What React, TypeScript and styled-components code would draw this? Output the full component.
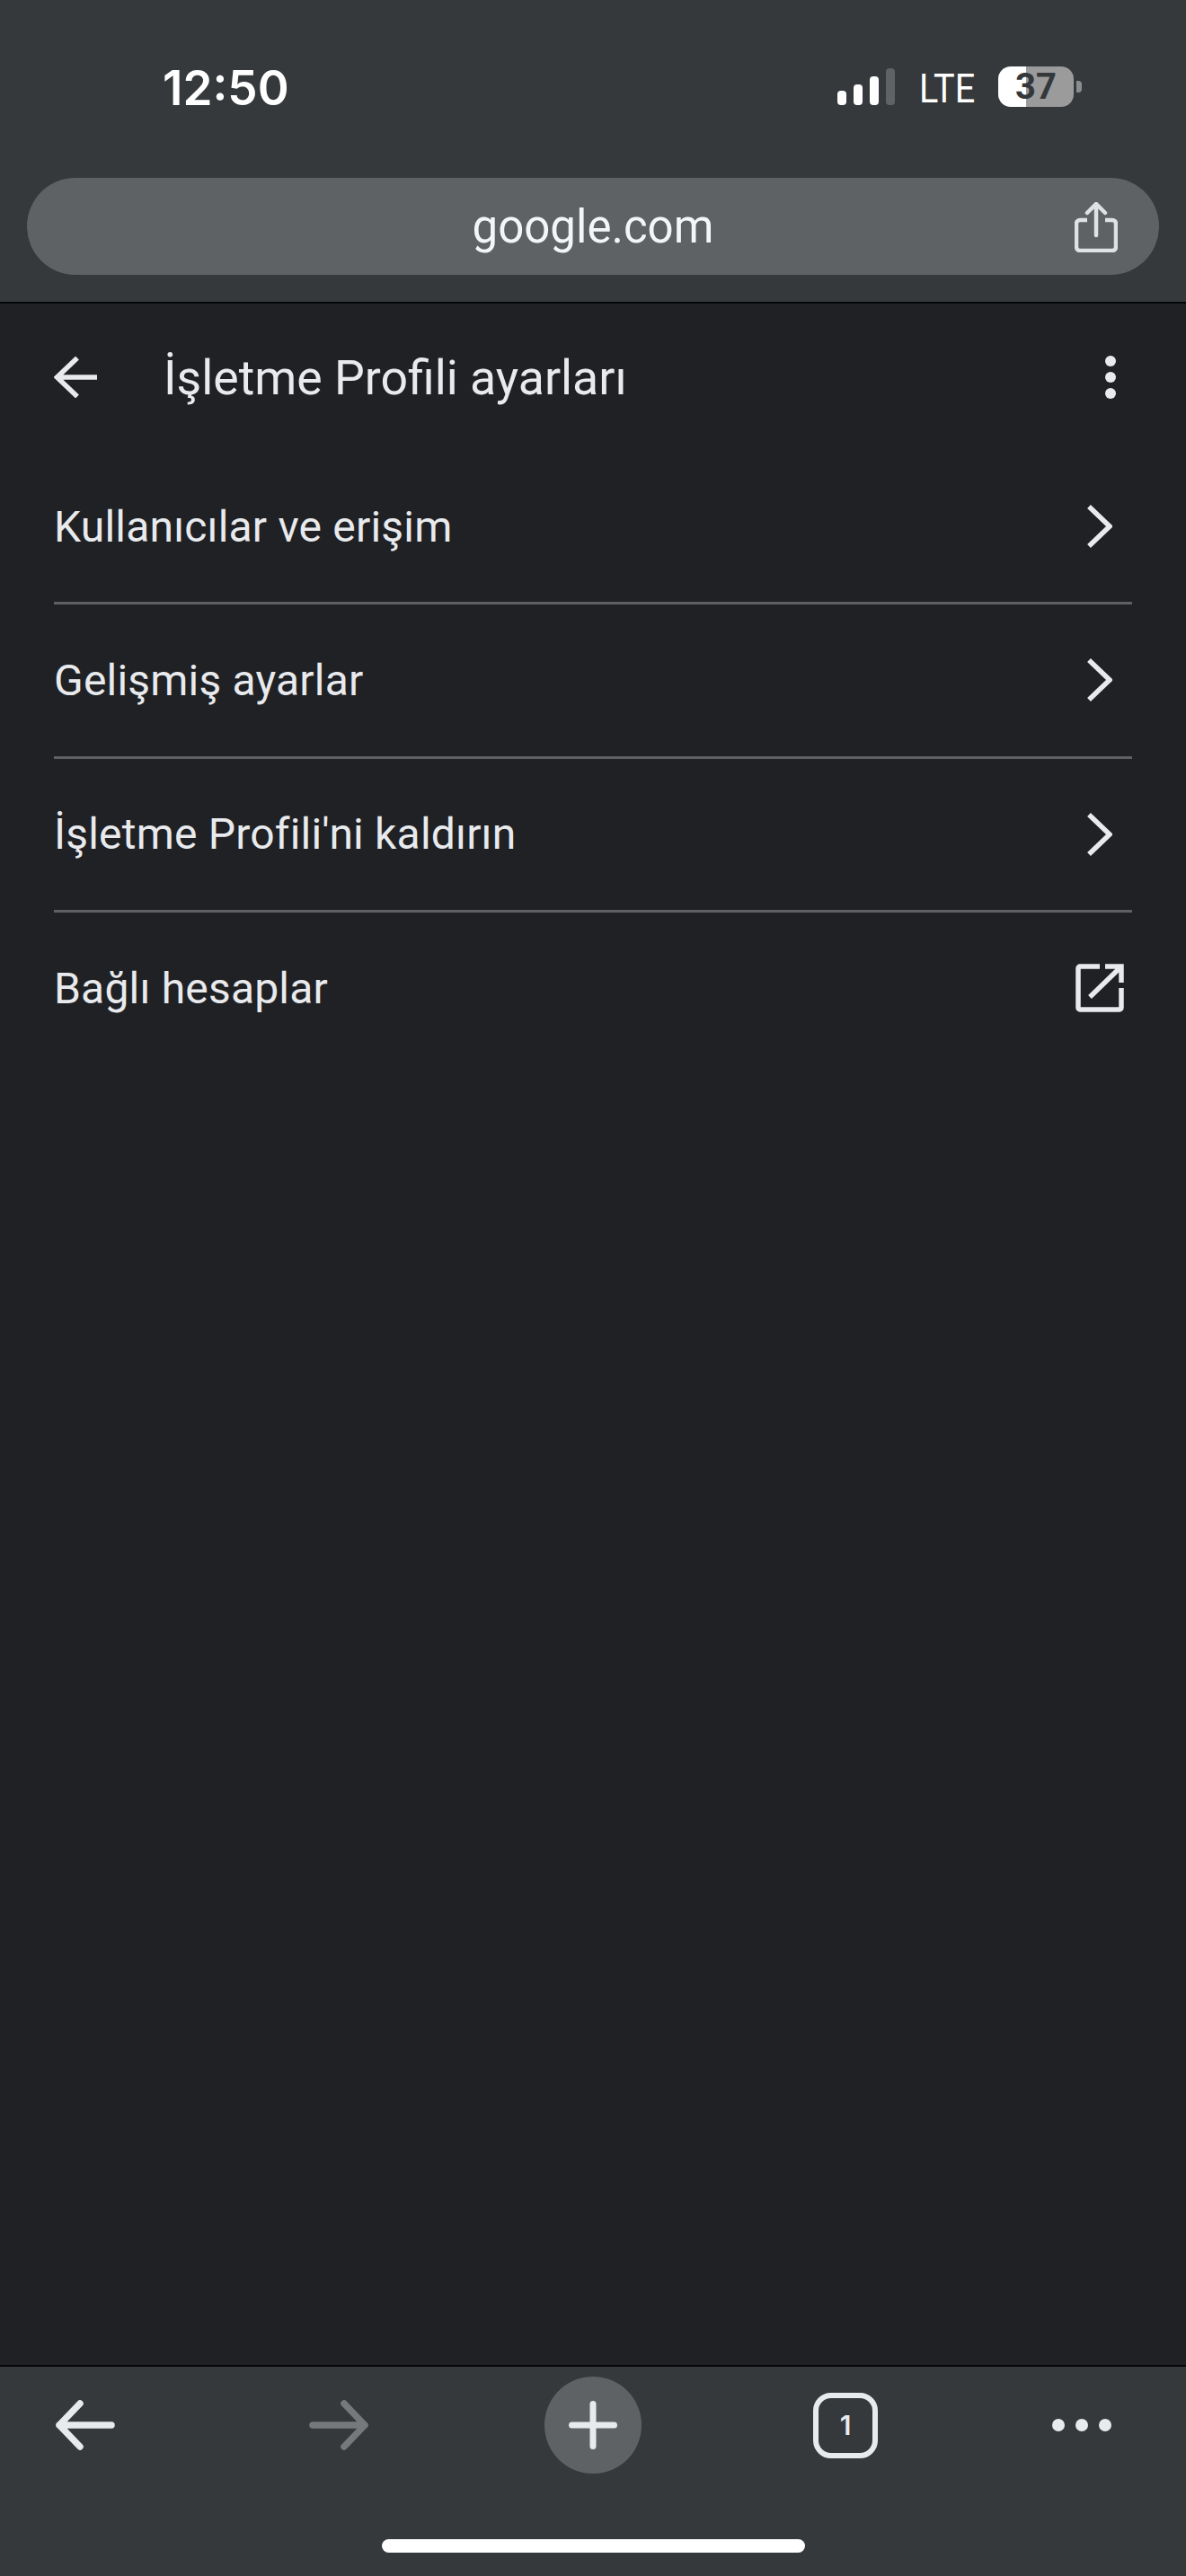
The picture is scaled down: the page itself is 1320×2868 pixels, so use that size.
// App.tsx
import React from 'react';
import styled, { createGlobalStyle } from 'styled-components';

const GlobalStyle = createGlobalStyle`
  html, body {
    margin: 0;
    padding: 0;
    background: #202125;
  }
  * {
    box-sizing: border-box;
  }
`;

const Page = styled.div`
  width: 1320px;
  height: 2868px;
  display: flex;
  flex-direction: column;
  background: #202125;
  font-family: Roboto, "Noto Sans", sans-serif;
  color: #e8eaed;
  overflow: hidden;
`;

const TopBar = styled.header`
  height: 338px;
  flex-shrink: 0;
  background: #35393b;
  border-bottom: 2px solid #050607;
  padding: 0 30px;
`;

const StatusBar = styled.div`
  height: 198px;
  display: flex;
  justify-content: space-between;
  padding: 68px 86px 0 151px;
`;

const Time = styled.div`
  font-family: Inter, sans-serif;
  font-size: 53px;
  font-weight: 600;
  line-height: 60px;
  color: #fff;
`;

const StatusRight = styled.div`
  display: flex;
  align-items: flex-start;
  padding-top: 6px;
`;

const Signal = styled.div`
  display: flex;
  align-items: flex-end;
  gap: 7.4px;
  height: 41px;
  margin-top: 2px;
`;

const SignalBar = styled.span<{ $h: number; $off?: boolean }>`
  width: 10.5px;
  height: ${(p) => p.$h}px;
  border-radius: 4px;
  background: ${(p) => (p.$off ? '#5f6365' : '#fff')};
`;

const Lte = styled.span`
  width: 60px;
  margin: 3px 0 0 27px;
  font-size: 45px;
  line-height: 44px;
  color: #fff;
  white-space: nowrap;
  transform: scaleX(0.88);
  transform-origin: left center;
`;

const Battery = styled.div`
  width: 84px;
  height: 45px;
  margin-left: 28px;
  border-radius: 14px;
  background: linear-gradient(90deg, #fff 0 37%, #9b9b9c 37% 100%);
  text-align: center;
  font-size: 40px;
  font-weight: 700;
  line-height: 45px;
  color: #35383a;
`;

const BatteryNub = styled.span`
  width: 6px;
  height: 13px;
  margin: 16px 0 0 3px;
  border-radius: 0 4px 4px 0;
  background: #8b8d8e;
`;

const UrlPill = styled.div`
  position: relative;
  height: 108px;
  border-radius: 54px;
  background: #5e6265;
  display: flex;
  align-items: center;
  justify-content: center;
  font-size: 51px;
  color: #f4f5f6;
`;

const ShareButton = styled.span`
  position: absolute;
  right: 46px;
  top: 27px;
  display: flex;
`;

const TitleRow = styled.div`
  height: 164px;
  flex-shrink: 0;
  display: flex;
  align-items: center;
  padding: 0 60px;
`;

const Title = styled.h1`
  flex: 1;
  margin: 0 0 0 74px;
  font-size: 53.6px;
  font-weight: 400;
  color: #e8eaed;
`;

const Dots = styled.span`
  display: flex;
  flex-direction: column;
  gap: 6px;
  margin-right: 18px;
`;

const Dot = styled.span`
  width: 12px;
  height: 12px;
  border-radius: 50%;
  background: #e8eaed;
`;

const List = styled.div`
  flex: 1;
  padding: 0 60px;
`;

const Row = styled.div`
  height: 171.3px;
  display: flex;
  align-items: center;
  justify-content: space-between;
  font-size: 48px;
  letter-spacing: 0.2px;
  border-bottom: 3px solid #5f6064;
  &:last-child {
    border-bottom-color: transparent;
  }
`;

const RowIcon = styled.span<{ $right: number }>`
  display: flex;
  margin-right: ${(p) => p.$right}px;
`;

const BottomBar = styled.footer`
  height: 235px;
  flex-shrink: 0;
  background: #35393b;
  border-top: 2px solid #050607;
`;

const BottomNav = styled.nav`
  height: 130px;
  display: grid;
  grid-template-columns: 282px 262px 299px 266px auto;
  align-items: center;
  justify-items: start;
  padding: 0 0 0 62px;
`;

const PlusCircle = styled.span`
  width: 108px;
  height: 108px;
  border-radius: 50%;
  background: #5e6265;
  display: flex;
  align-items: center;
  justify-content: center;
`;

const TabCount = styled.span`
  width: 72px;
  height: 73px;
  border: 6px solid #e8eaed;
  border-radius: 20px;
  display: flex;
  align-items: center;
  justify-content: center;
  font-family: Inter, sans-serif;
  font-size: 30px;
  font-weight: 600;
  color: #e8eaed;
`;

const MoreDots = styled.span`
  display: flex;
  gap: 12px;
`;

const MoreDot = styled.span`
  width: 14px;
  height: 14px;
  border-radius: 50%;
  background: #e8eaed;
`;

const HomeIndicator = styled.div`
  width: 471px;
  height: 15px;
  margin: 62px auto 0;
  border-radius: 8px;
  background: #fff;
`;

const ShareIcon = () => (
  <svg width="48" height="56" viewBox="0 0 48 56" fill="none" stroke="#dfe1e3" strokeWidth="4.5">
    <path d="M14 20H6a4 4 0 0 0-4 4v26a4 4 0 0 0 4 4h36a4 4 0 0 0 4-4V24a4 4 0 0 0-4-4h-8" />
    <path d="M24 37V3M14 12l10-10 10 10" strokeLinecap="round" />
  </svg>
);

const HeaderBack = () => (
  <svg width="48" height="46" viewBox="0 0 48 46" fill="none" stroke="#e8eaed" strokeWidth="5.5">
    <path d="M48 23H3M26 1.5L3.5 23 26 44.5" />
  </svg>
);

const Chevron = () => (
  <svg width="28" height="48" viewBox="0 0 28 48" fill="none" stroke="#e8eaed" strokeWidth="5.5">
    <path d="M2 2l23 22L2 46" />
  </svg>
);

const ExternalLink = () => (
  <svg width="54" height="54" viewBox="0 0 54 54" fill="none" stroke="#e8eaed" strokeWidth="5.5">
    <path d="M27 3H5a2 2 0 0 0-2 2v44a2 2 0 0 0 2 2h44a2 2 0 0 0 2-2V27" />
    <path d="M33 3h18v18M49 5L16 37" />
  </svg>
);

const NavArrow = ({ color, flip }: { color: string; flip?: boolean }) => (
  <svg
    width="66"
    height="56"
    viewBox="0 0 66 56"
    fill="none"
    stroke={color}
    strokeWidth="7.5"
    strokeLinecap="round"
    strokeLinejoin="round"
    transform={flip ? 'scale(-1 1)' : undefined}
  >
    <path d="M62 28H4M27 4L4 28l23 24" />
  </svg>
);

const PlusIcon = () => (
  <svg width="54" height="54" viewBox="0 0 54 54" fill="none" stroke="#e8eaed" strokeWidth="7" strokeLinecap="round">
    <path d="M3.5 27h47M27 3.5v47" />
  </svg>
);

const items = ['Kullanıcılar ve erişim', 'Gelişmiş ayarlar', "İşletme Profili'ni kaldırın"];

const App: React.FC = () => {
  return (
    <Page>
      <GlobalStyle />
      <TopBar>
        <StatusBar>
          <Time>12:50</Time>
          <StatusRight>
            <Signal>
              <SignalBar $h={16} />
              <SignalBar $h={23} />
              <SignalBar $h={32} />
              <SignalBar $h={41} $off />
            </Signal>
            <Lte>LTE</Lte>
            <Battery>37</Battery>
            <BatteryNub />
          </StatusRight>
        </StatusBar>
        <UrlPill>
          google.com
          <ShareButton>
            <ShareIcon />
          </ShareButton>
        </UrlPill>
      </TopBar>

      <TitleRow>
        <HeaderBack />
        <Title>İşletme Profili ayarları</Title>
        <Dots>
          <Dot />
          <Dot />
          <Dot />
        </Dots>
      </TitleRow>

      <List>
        {items.map((item) => (
          <Row key={item}>
            {item}
            <RowIcon $right={22}>
              <Chevron />
            </RowIcon>
          </Row>
        ))}
        <Row>
          Bağlı hesaplar
          <RowIcon $right={9}>
            <ExternalLink />
          </RowIcon>
        </Row>
      </List>

      <BottomBar>
        <BottomNav>
          <NavArrow color="#e8eaed" />
          <NavArrow color="#76797b" flip />
          <PlusCircle>
            <PlusIcon />
          </PlusCircle>
          <TabCount>1</TabCount>
          <MoreDots>
            <MoreDot />
            <MoreDot />
            <MoreDot />
          </MoreDots>
        </BottomNav>
        <HomeIndicator />
      </BottomBar>
    </Page>
  );
};

export default App;
